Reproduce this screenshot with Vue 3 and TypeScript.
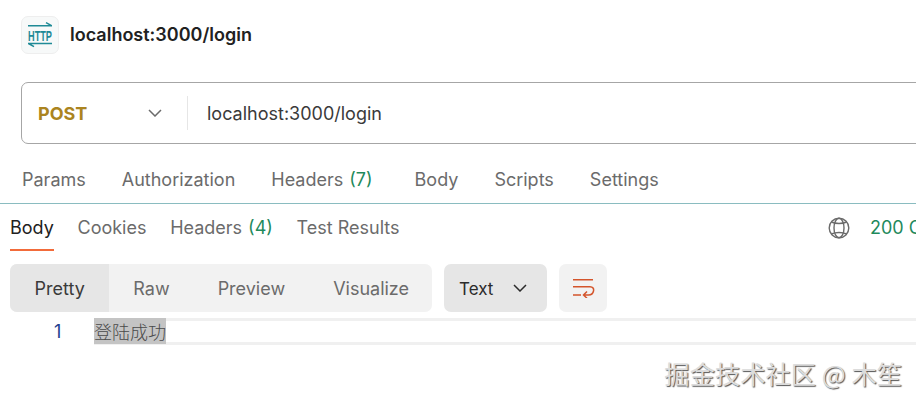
<template>
  <div class="page">
    <!-- 请求标题 -->
    <header class="title-row">
      <span class="http-icon">
        <svg width="26" height="26" viewBox="0 0 26 26" fill="none" stroke="#1f8a96" stroke-width="1.5">
          <path d="M1 3.700h24M19 .7l5.500 3M1 21.500h24M1.500 21.500l5.500 3.200" />
          <text x="1" y="18.600" textLength="24" lengthAdjust="spacingAndGlyphs" class="http-text">HTTP</text>
        </svg>
      </span>
      <span class="title">localhost:3000/login</span>
    </header>

    <!-- 地址栏 -->
    <div class="url-bar">
      <div class="method">
        <span>POST</span>
        <svg width="14" height="8" viewBox="0 0 14 8" fill="none" stroke="#6b6b6b" stroke-width="1.5">
          <path d="M1 1l6 6 6-6" />
        </svg>
      </div>
      <span class="url">localhost:3000/login</span>
    </div>

    <nav class="request-tabs">
      <span v-for="tab in requestTabs" :key="tab.label" class="req-tab">
        {{ tab.label }}<em v-if="tab.count" class="count">({{ tab.count }})</em>
      </span>
    </nav>

    <div class="response-head">
      <nav class="response-tabs">
        <span
          v-for="(tab, index) in responseTabs"
          :key="tab.label"
          :class="['res-tab', { 'res-tab--active': index === 0 }]"
        >
          {{ tab.label }}<em v-if="tab.count" class="count">({{ tab.count }})</em>
        </span>
      </nav>
      <div class="status">
        <svg class="globe" width="22" height="22" viewBox="0 0 22 22" fill="none" stroke="#6b6b6b" stroke-width="1.4">
          <circle cx="11" cy="11" r="9.800" />
          <ellipse cx="11" cy="11" rx="5" ry="9.800" />
          <path d="M3.500 5c4 2 11 2 15 0M3.500 17c4-2 11-2 15 0" />
        </svg>
        <span class="status-text">200 OK</span>
      </div>
    </div>

    <div class="toolbar">
      <div class="segments">
        <span
          v-for="(mode, index) in modes"
          :key="mode"
          :class="['segment', { 'segment--active': index === 0 }]"
        >{{ mode }}</span>
      </div>
      <div class="format">
        <span class="format-label">Text</span>
        <svg width="14" height="8" viewBox="0 0 14 8" fill="none" stroke="#2b2b2b" stroke-width="1.5">
          <path d="M1 1l6 6 6-6" />
        </svg>
      </div>
      <div class="wrap-btn">
        <svg width="24" height="20" viewBox="0 0 24 20" fill="none" stroke="#d4552c" stroke-width="1.500">
          <path d="M2 1.700h20M2 8.700h17c3 0 4 2 3.500 4.300-.5 2.500-2.500 4-5 4H12.500M2 17h8M16 13.500L12.500 17l3.500 3.200" />
        </svg>
      </div>
    </div>

    <div class="code-line">
      <span class="line-no">1</span>
      <div class="code-area">
        <span class="code-text">登陆成功</span>
      </div>
    </div>

    <div class="watermark">掘金技术社区 @ 木笙</div>
  </div>
</template>

<script setup lang="ts">
interface TabItem {
  label: string;
  count?: number;
}

const requestTabs: TabItem[] = [
  { label: 'Params' },
  { label: 'Authorization' },
  { label: 'Headers', count: 7 },
  { label: 'Body' },
  { label: 'Scripts' },
  { label: 'Settings' }
];

const responseTabs: TabItem[] = [
  { label: 'Body' },
  { label: 'Cookies' },
  { label: 'Headers', count: 4 },
  { label: 'Test Results' }
];

const modes = ['Pretty', 'Raw', 'Preview', 'Visualize'];
</script>

<style>
html,
body {
  margin: 0;
  background: #fff;
  overflow: hidden;
}
</style>

<style scoped>
.page {
  width: 916px;
  height: 403px;
  overflow: hidden;
  font-family: Inter, "Noto Sans", sans-serif;
  color: #6b6b6b;
  font-size: 18px;
  background: #fff;
}

.title-row {
  display: flex;
  align-items: center;
  gap: 11px;
  height: 38px;
  padding: 16px 0 0 21px;
}

.http-icon {
  width: 38px;
  height: 38px;
  box-sizing: border-box;
  display: flex;
  align-items: center;
  justify-content: center;
  background: #f7f9f9;
  border: 1px solid #eeeeee;
  border-radius: 7px;
}

.http-text {
  font-family: "Liberation Sans", sans-serif;
  font-size: 14px;
  font-weight: 700;
  fill: #1f8a96;
  stroke: none;
}

.title {
  font-weight: 600;
  color: #212121;
  margin-bottom: 2px;
}

.url-bar {
  display: flex;
  align-items: center;
  width: 1000px;
  height: 62px;
  box-sizing: border-box;
  margin: 28px 0 0 21px;
  border: 1px solid #a6a6a6;
  border-radius: 7px;
}

.method {
  display: flex;
  align-items: center;
  justify-content: space-between;
  width: 166px;
  height: 34px;
  box-sizing: border-box;
  padding: 0 25px 0 16px;
  border-right: 1px solid #e6e6e6;
  font-weight: 700;
  color: #ab8420;
}

.url {
  margin-left: 19px;
  color: #3a3a3a;
}

.request-tabs {
  display: flex;
  gap: 36px;
  height: 60px;
  align-items: center;
  padding: 11px 0 0 22px;
  box-sizing: border-box;
  border-bottom: 1px solid #8abcc0;
}

.req-tab,
.res-tab {
  white-space: nowrap;
}

.count {
  font-style: normal;
  color: #1f8a5c;
  margin-left: 6px;
}

.req-tab .count {
  margin-right: 6px;
}

.response-head {
  display: flex;
  justify-content: space-between;
  height: 47px;
  padding-left: 10px;
  box-sizing: border-box;
}

.response-tabs {
  display: flex;
  gap: 23.700px;
}

.res-tab {
  height: 47px;
  line-height: 48px;
  box-sizing: border-box;
}

.res-tab--active {
  color: #212121;
  border-bottom: 2px solid #f26b3a;
}

.status {
  display: flex;
  align-items: center;
  gap: 20px;
  width: 88px;
  height: 47px;
  white-space: nowrap;
}

.globe {
  flex: none;
}

.status-text {
  color: #1f8a5c;
}

.toolbar {
  display: flex;
  gap: 12px;
  height: 48px;
  margin: 13px 0 0 10px;
}

.segments {
  display: flex;
  width: 422px;
  background: #f2f2f2;
  border-radius: 7px;
  overflow: hidden;
}

.segment {
  display: flex;
  align-items: center;
  padding: 0 24px;
}

.segment--active {
  padding: 0 24.500px;
  background: #e6e6e6;
  color: #3a3a3a;
}

.format {
  display: flex;
  align-items: center;
  justify-content: space-between;
  width: 103px;
  box-sizing: border-box;
  padding: 0 20px 0 15px;
  background: #e6e6e6;
  border-radius: 7px;
  color: #2b2b2b;
  font-size: 17px;
}

.format-label {
  line-height: 24px;
  padding-top: 1px;
}

.wrap-btn {
  display: flex;
  align-items: center;
  justify-content: center;
  width: 48px;
  background: #f2f2f2;
  border-radius: 7px;
}

.code-line {
  display: flex;
  height: 27px;
  margin-top: 6px;
}

.line-no {
  width: 94px;
  box-sizing: border-box;
  padding-left: 54px;
  line-height: 27px;
  color: #24408e;
}

.code-area {
  flex: 1;
  box-sizing: border-box;
  height: 27px;
  border-top: 3px solid #f0f0f0;
  border-bottom: 3px solid #f0f0f0;
}

.code-text {
  display: block;
  width: 72px;
  height: 26px;
  margin-top: -3px;
  background: #c4c4c4;
  color: #4a4a4a;
  font-family: "Noto Sans CJK SC", sans-serif;
  line-height: 26px;
  font-weight: 300;
}

.watermark {
  margin: 12px 14px 0 0;
  text-align: right;
  font-family: "Noto Sans CJK SC", sans-serif;
  font-size: 25.300px;
  line-height: 32px;
  color: #dcdcdc;
  text-shadow: 1px 1px 1px #555;
}
</style>
